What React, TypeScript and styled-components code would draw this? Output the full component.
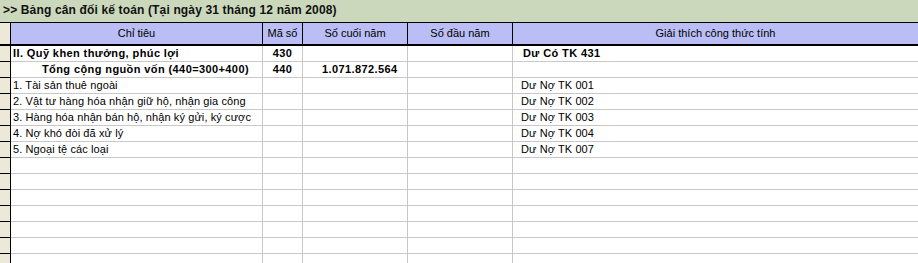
import React from "react";
import styled, { createGlobalStyle } from "styled-components";

const GlobalStyle = createGlobalStyle`
  html, body {
    margin: 0;
    padding: 0;
    background: #ffffff;
    overflow: hidden;
  }
  body {
    font-family: "Liberation Sans", Arial, sans-serif;
  }
`;

const colors = {
  titleBg: "#cbd8bc",
  headerBg: "#babef5",
  rowHead: "#ece9d8",
  dark: "#000000",
  grid: "#c8c8c8",
  text: "#000000",
};

const columns = "11px 252px 40px 105px 105px 1fr";

const Page = styled.div`
  width: 918px;
  height: 263px;
  overflow: hidden;
  background: #ffffff;
`;

const TitleBar = styled.div`
  background: ${colors.titleBg};
  border-bottom: 1px solid ${colors.dark};
  display: flex;
  align-items: center;
  padding-left: 3px;
  box-sizing: border-box;
  height: 23px;
  font-size: 12px;
  font-weight: bold;
  letter-spacing: 0.15px;
  color: #111;
  padding-bottom: 2px;
`;

const HeaderRow = styled.div`
  display: grid;
  grid-template-columns: ${columns};
  height: 23px;
  border-bottom: 2px solid ${colors.dark};
  box-sizing: border-box;
  background: ${colors.headerBg};
`;

const HeaderCell = styled.div`
  border-right: 1px solid ${colors.dark};
  display: flex;
  align-items: center;
  justify-content: center;
  font-size: 11px;
  color: ${colors.text};
  padding-bottom: 1px;
  &:last-child {
    border-right: none;
  }
`;

const RowHead = styled.div`
  background: ${colors.rowHead};
  border-right: 1px solid ${colors.dark};
  border-bottom: 1px solid ${colors.dark};
`;

const HeaderCorner = styled.div`
  background: ${colors.rowHead};
  border-right: 1px solid ${colors.dark};
`;

const Row = styled.div`
  display: grid;
  grid-template-columns: ${columns};
  height: 16px;
`;

type CellProps = {
  $bold?: boolean;
  $align?: "left" | "center";
  $pad?: number;
};

const Cell = styled.div<CellProps>`
  border-right: 1px solid ${colors.grid};
  border-bottom: 1px solid ${colors.grid};
  font-size: 11px;
  line-height: 15px;
  font-weight: ${(p) => (p.$bold ? "bold" : "normal")};
  letter-spacing: ${(p) => (p.$bold ? "0.4px" : "0.1px")};
  text-align: ${(p) => p.$align || "left"};
  padding-left: ${(p) => p.$pad ?? 2}px;
  white-space: nowrap;
  overflow: hidden;
  color: ${colors.text};
  &:last-child {
    border-right: none;
  }
`;

type RowData = {
  name: string;
  code?: string;
  end?: string;
  start?: string;
  note?: string;
  bold?: boolean;
  indent?: number;
};

const rows: RowData[] = [
  { name: "II. Quỹ khen thưởng, phúc lợi", code: "430", note: "Dư Có TK 431", bold: true },
  { name: "Tổng cộng nguồn vốn (440=300+400)", code: "440", end: "1.071.872.564", bold: true, indent: 31 },
  { name: "1. Tài sản thuê ngoài", note: "Dư Nợ TK 001" },
  { name: "2. Vật tư hàng hóa nhận giữ hộ, nhận gia công", note: "Dư Nợ TK 002" },
  { name: "3. Hàng hóa nhận bán hộ, nhận ký gửi, ký cược", note: "Dư Nợ TK 003" },
  { name: "4. Nợ khó đòi đã xử lý", note: "Dư Nợ TK 004" },
  { name: "5. Ngoại tệ các loại", note: "Dư Nợ TK 007" },
];

const emptyRows = Array.from({ length: 8 }, () => ({ name: "" } as RowData));

export default function App() {
  const all = [...rows, ...emptyRows];
  return (
    <Page>
      <GlobalStyle />
      <TitleBar>&gt;&gt; Bảng cân đối kế toán (Tại ngày 31 tháng 12 năm 2008)</TitleBar>
      <HeaderRow>
        <HeaderCorner />
        <HeaderCell>Chỉ tiêu</HeaderCell>
        <HeaderCell>Mã số</HeaderCell>
        <HeaderCell>Số cuối năm</HeaderCell>
        <HeaderCell>Số đầu năm</HeaderCell>
        <HeaderCell>Giải thích công thức tính</HeaderCell>
      </HeaderRow>
      {all.map((r, i) => (
        <Row key={i}>
          <RowHead />
          <Cell $bold={r.bold} $pad={r.indent ?? 2}>
            {r.name}
          </Cell>
          <Cell $bold={r.bold} $align="center" $pad={0}>
            {r.code}
          </Cell>
          <Cell $bold={r.bold} $pad={19}>
            {r.end}
          </Cell>
          <Cell $bold={r.bold}>{r.start}</Cell>
          <Cell $bold={r.bold} $pad={r.bold ? 10 : 8}>
            {r.note}
          </Cell>
        </Row>
      ))}
    </Page>
  );
}
